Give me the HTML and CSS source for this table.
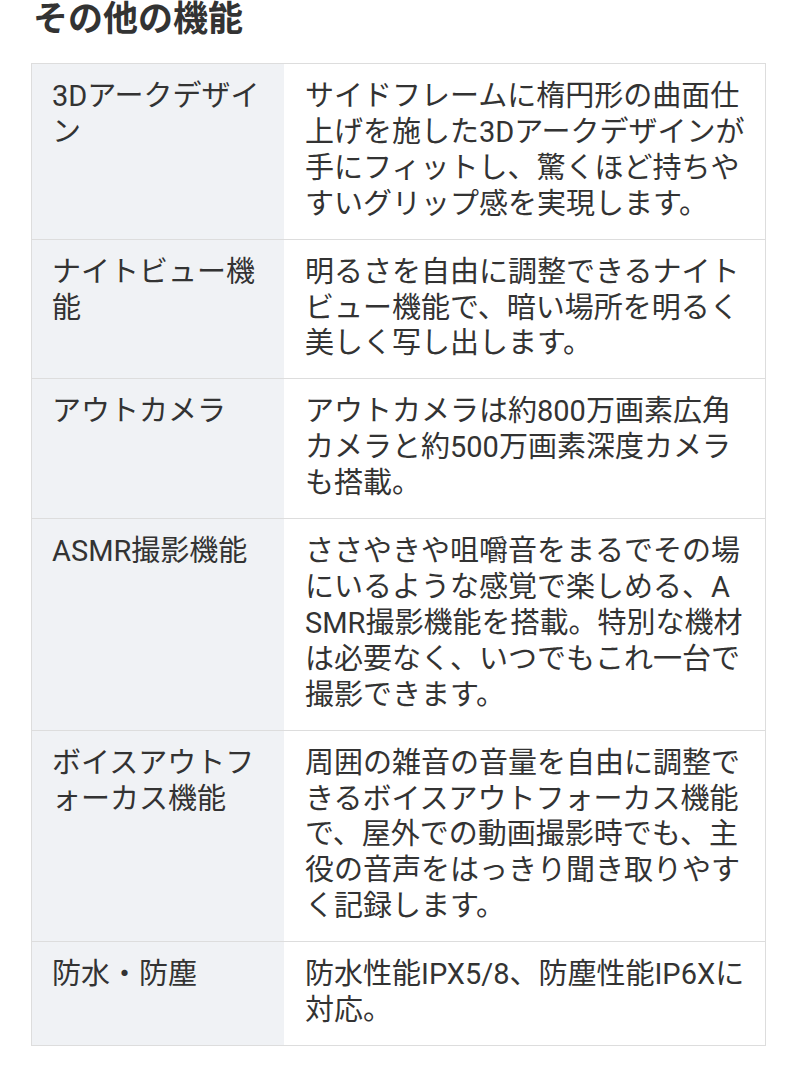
FILE: index.html
```html
<!DOCTYPE html>
<html lang="ja">
<head>
<meta charset="utf-8">
<link rel="stylesheet" href="styles.css">
</head>
<body>
<h2 class="title">その他の機能</h2>
<table class="spec">
<tbody>
<tr><th>3Dアークデザイン</th><td>サイドフレームに楕円形の曲面仕上げを施した3Dアークデザインが手にフィットし、驚くほど持ちやすいグリップ感を実現します。</td></tr>
<tr><th>ナイトビュー機能</th><td>明るさを自由に調整できるナイトビュー機能で、暗い場所を明るく美しく写し出します。</td></tr>
<tr><th>アウトカメラ</th><td>アウトカメラは約800万画素広角カメラと約500万画素深度カメラも搭載。</td></tr>
<tr><th>ASMR撮影機能</th><td>ささやきや咀嚼音をまるでその場にいるような感覚で楽しめる、ASMR撮影機能を搭載。特別な機材は必要なく、いつでもこれ一台で撮影できます。</td></tr>
<tr><th>ボイスアウトフォーカス機能</th><td>周囲の雑音の音量を自由に調整できるボイスアウトフォーカス機能で、屋外での動画撮影時でも、主役の音声をはっきり聞き取りやすく記録します。</td></tr>
<tr><th>防水・防塵</th><td>防水性能IPX5/8、防塵性能IP6Xに対応。</td></tr>
</tbody>
</table>
</body>
</html>
```
FILE: styles.css
```css
html, body {
  margin: 0;
  padding: 0;
  background: #fff;
}
body {
  font-family: Roboto, "Noto Sans CJK JP", sans-serif;
  color: #333;
}
.title {
  margin: 0 0 23px 33px;
  font-size: 35px;
  line-height: 40px;
  font-weight: 700;
  color: #333;
}
.spec {
  margin-left: 31px;
  width: 735px;
  border-collapse: collapse;
  border: 1px solid #ddd;
  font-size: 29px;
  line-height: 35.9px;
  word-break: break-all;
  line-break: anywhere;
}
.spec tr {
  border-bottom: 1px solid #ddd;
}
.spec th,
.spec td {
  padding: 15px 20px 16px 20px;
  vertical-align: top;
  text-align: left;
  font-weight: 400;
}
.spec th {
  width: 212px;
  background: #f0f2f5;
}
.spec td {
  padding-left: 21px;
}
```
